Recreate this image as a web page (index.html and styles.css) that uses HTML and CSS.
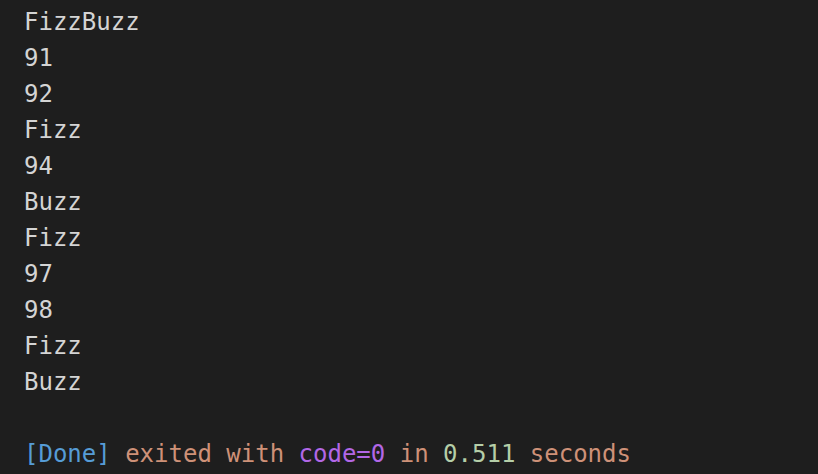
FILE: index.html
```html
<!DOCTYPE html>
<html>
<head>
<meta charset="utf-8">
<link rel="stylesheet" href="styles.css">
</head>
<body>
<div class="output">
<div class="line">FizzBuzz</div>
<div class="line">91</div>
<div class="line">92</div>
<div class="line">Fizz</div>
<div class="line">94</div>
<div class="line">Buzz</div>
<div class="line">Fizz</div>
<div class="line">97</div>
<div class="line">98</div>
<div class="line">Fizz</div>
<div class="line">Buzz</div>
<div class="line">&nbsp;</div>
<div class="line"><span class="done">[Done]</span> <span class="str">exited with</span> <span class="code">code=0</span> <span class="str">in</span> <span class="num">0.511</span> <span class="str">seconds</span></div>
</div>
</body>
</html>
```
FILE: styles.css
```css
html, body {
  margin: 0;
  padding: 0;
  background: #1e1e1e;
  height: 100%;
  overflow: hidden;
}
.output {
  padding: 4px 0 0 24px;
  font-family: "DejaVu Sans Mono", monospace;
  font-size: 24px;
  line-height: 36px;
  color: #d4d4d4;
}
.line { white-space: pre; height: 36px; }
.done { color: #569cd6; }
.str { color: #ce9178; }
.code { color: #b267e6; }
.num { color: #b5cea8; }
```
